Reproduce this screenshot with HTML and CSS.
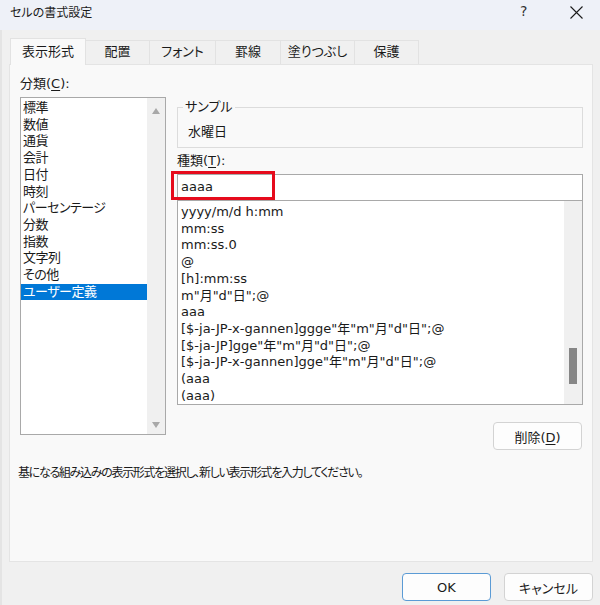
FILE: index.html
```html
<!DOCTYPE html>
<html lang="ja">
<head>
<meta charset="utf-8">
<title>セルの書式設定</title>
<link rel="stylesheet" href="styles.css">
</head>
<body>
<div class="window">
  <div class="titlebar">
    <span class="title">セルの書式設定</span>
    <span class="help">?</span>
    <span class="close"><svg width="13" height="13" viewBox="0 0 13 13"><path d="M0.5 0.5L12.5 12.5M12.5 0.5L0.5 12.5" stroke="#1b1b1b" stroke-width="1.1" fill="none"/></svg></span>
  </div>
  <div class="tabs">
    <div class="tab active t1">表示形式</div>
    <div class="tab t2">配置</div>
    <div class="tab t3">フォント</div>
    <div class="tab t4">罫線</div>
    <div class="tab t5">塗りつぶし</div>
    <div class="tab t6">保護</div>
  </div>
  <div class="panel">
    <div class="left">
      <div class="label">分類(<u>C</u>):</div>
      <div class="catlist">
        <ul class="items">
          <li>標準</li>
          <li>数値</li>
          <li>通貨</li>
          <li>会計</li>
          <li>日付</li>
          <li>時刻</li>
          <li>パーセンテージ</li>
          <li>分数</li>
          <li>指数</li>
          <li>文字列</li>
          <li>その他</li>
          <li class="selected">ユーザー定義</li>
        </ul>
        <div class="vscroll">
          <span class="arrow up"></span>
          <span class="arrow down"></span>
        </div>
      </div>
    </div>
    <div class="right">
      <fieldset class="sample">
        <legend>サンプル</legend>
        <div class="sample-value">水曜日</div>
      </fieldset>
      <div class="label type-label">種類(<u>T</u>):</div>
      <div class="typebox">
        <div class="input">aaaa</div>
        <div class="mark"></div>
      </div>
      <div class="fmtlist">
        <ul class="items">
          <li>yyyy/m/d h:mm</li>
          <li>mm:ss</li>
          <li>mm:ss.0</li>
          <li>@</li>
          <li>[h]:mm:ss</li>
          <li>m"月"d"日";@</li>
          <li>aaa</li>
          <li>[$-ja-JP-x-gannen]ggge"年"m"月"d"日";@</li>
          <li>[$-ja-JP]gge"年"m"月"d"日";@</li>
          <li>[$-ja-JP-x-gannen]gge"年"m"月"d"日";@</li>
          <li>(aaa</li>
          <li>(aaa)</li>
        </ul>
        <div class="track"><div class="thumb"></div></div>
      </div>
      <div class="btnrow"><button class="btn">削除(<u>D</u>)</button></div>
    </div>
    <p class="desc">基になる組み込みの表示形式を選択し、新しい表示形式を入力してください。</p>
  </div>
  <div class="footer">
    <button class="btn default">OK</button>
    <button class="btn">キャンセル</button>
  </div>
</div>
</body>
</html>
```
FILE: styles.css
```css
* { box-sizing: border-box; }
html, body { margin: 0; padding: 0; }
body {
  width: 600px;
  height: 605px;
  overflow: hidden;
  background: #f0f0f0;
  font-family: "DejaVu Sans", "Noto Sans CJK JP", sans-serif;
  font-size: 13px;
  color: #1a1a1a;
  font-feature-settings: "palt";
}
.window {
  width: 600px;
  height: 605px;
  background: #f0f0f0;
  box-shadow: inset 2px 0 0 #e4e4e4;
}
.titlebar {
  height: 30px;
  background: #eef1f8;
  display: flex;
  align-items: flex-start;
  padding: 5px 0 0 10px;
  line-height: 16px;
}
.title { font-size: 12px; flex: 1; }
.help { font-size: 14px; width: 50px; margin-top: -2px; color: #333; }
.close { width: 30px; padding-top: 1px; }

.tabs {
  display: flex;
  align-items: flex-end;
  height: 34px;
  padding-left: 10px;
  position: relative;
  z-index: 2;
}
.tab {
  height: 24px;
  line-height: 22px;
  text-align: center;
  border: 1px solid #e2e2e2;
  border-bottom: none;
  margin-left: -1px;
  background: #f0f0f0;
}
.tab.active {
  height: 27px;
  line-height: 25px;
  background: #f9f9f9;
  margin-bottom: -1px;
  margin-left: 0;
}
.t1 { width: 76px; }
.t2 { width: 65px; }
.t3 { width: 67px; }
.t4 { width: 66px; }
.t5 { width: 75px; }
.t6 { width: 65px; }

.panel {
  margin: 0 7px 0 9px;
  height: 498px;
  background: #f9f9f9;
  border: 1px solid #e4e4e4;
  display: grid;
  grid-template-columns: 146px 406px;
  column-gap: 11px;
  align-content: start;
  padding: 0 0 0 10px;
  position: relative;
  z-index: 1;
}
.label { line-height: 16px; }
.left .label { margin-top: 11px; }
u { text-decoration-thickness: 1px; text-underline-offset: 2px; }

.items { list-style: none; margin: 0; padding: 0; }
.items li { line-height: 16.7px; white-space: nowrap; }

.catlist {
  margin-top: 5px;
  height: 338px;
  background: #fff;
  border: 1px solid #a9a9a9;
  display: flex;
}
.catlist .items { flex: 1; padding-top: 2px; }
.catlist .items li { padding-left: 2px; letter-spacing: -0.5px; }
.catlist .items li.selected { background: #0078d7; color: #fff; }
.vscroll {
  width: 18px;
  background: #f0f0f0;
  display: flex;
  flex-direction: column;
  justify-content: space-between;
  align-items: center;
  padding: 10px 0 6px;
}
.arrow { width: 0; height: 0; border-left: 4.5px solid transparent; border-right: 4.5px solid transparent; }
.arrow.up { border-bottom: 6px solid #a8a8a8; }
.arrow.down { border-top: 6px solid #a8a8a8; }

.sample {
  margin: 34px 0 0;
  padding: 9px 10px 7px;
  border: 1px solid #dcdcdc;
  height: 49px;
}
.sample legend { padding: 0 2px; margin-left: -5px; line-height: 16px; }
.sample-value { line-height: 16px; }

.type-label { margin-top: 5px; }
.typebox { margin-top: 5px; position: relative; }
.input {
  height: 26px;
  background: #fff;
  border: 1px solid #a9a9a9;
  border-bottom: none;
  padding-left: 3px;
  line-height: 24px;
}
.mark {
  position: absolute;
  left: -6px;
  top: -3px;
  width: 104px;
  height: 29px;
  border: 3px solid #e60b1c;
}
.fmtlist {
  height: 205px;
  background: #fff;
  border: 1px solid #a9a9a9;
  display: flex;
}
.fmtlist .items { flex: 1; padding: 3px 0 0 3px; overflow: hidden; }
.track { width: 18px; background: #f0f0f0; padding: 147px 0 0 5px; }
.thumb { width: 8px; height: 36px; background: #868686; }

.btnrow { display: flex; justify-content: flex-end; margin-top: 17px; padding-right: 1px; }
.btn {
  width: 89px;
  height: 28px;
  font: inherit;
  color: #1a1a1a;
  background: #fdfdfd;
  border: 1px solid #d3d3d3;
  border-radius: 4px;
  padding: 0;
}
.desc {
  grid-column: 1 / -1;
  margin: 15px 0 0 -2px;
  line-height: 16px;
  font-size: 12px;
  letter-spacing: -1.3px;
}
.footer {
  display: flex;
  justify-content: flex-end;
  gap: 13px;
  padding: 11px 7px 0 0;
}
.btn.default { border-color: #5b9bd5; }
```
